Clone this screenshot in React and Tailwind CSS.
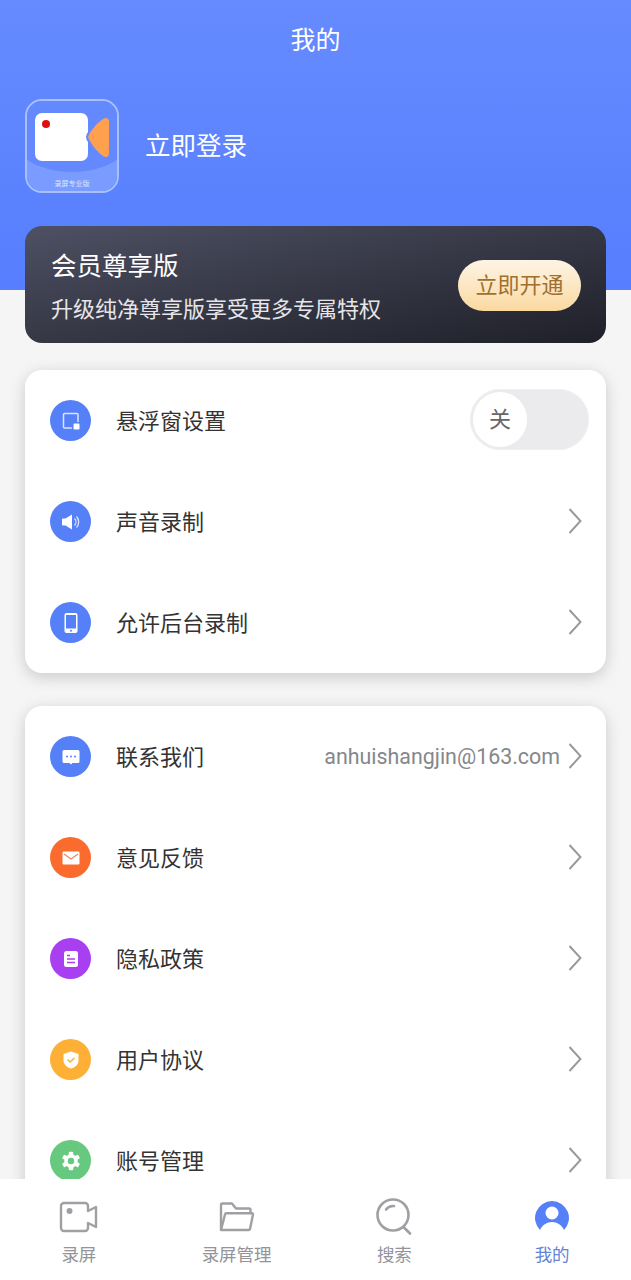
const FONT = "font-['Roboto','Noto_Sans_CJK_SC',sans-serif]"

// small white glyphs that sit inside the coloured round icons
const FloatIcon = () => (
  <svg width="20" height="20" viewBox="0 0 20 20" fill="none">
    <path d="M11 17H3.500a1 1 0 0 1-1-1V3.500a1 1 0 0 1 1-1H16a1 1 0 0 1 1 1V11" stroke="#dbe4ff" strokeWidth="1.500" />
    <rect x="12.500" y="12.500" width="6" height="6" rx="1.200" fill="#fff" />
  </svg>
)

const SoundIcon = () => (
  <svg width="20" height="20" viewBox="0 0 20 20" fill="none">
    <path d="M1 7.500a1 1 0 0 1 1-1h2.500L11 2.500v15l-6.500-4H2a1 1 0 0 1-1-1z" fill="#fff" />
    <path d="M13.500 6.500a5 5 0 0 1 0 7" stroke="#dbe4ff" strokeWidth="1.300" />
    <path d="M15.500 4.500a8 8 0 0 1 0 11" stroke="#dbe4ff" strokeWidth="1.300" />
  </svg>
)

const PhoneIcon = () => (
  <svg width="20" height="22" viewBox="0 0 20 22" fill="none">
    <rect x="3.500" y="1" width="13" height="20" rx="2" fill="#fff" />
    <rect x="5" y="3" width="10" height="13.500" fill="#5680f8" />
    <circle cx="10" cy="18.700" r="1" fill="#5680f8" />
  </svg>
)

const ChatIcon = () => (
  <svg width="20" height="20" viewBox="0 0 20 20" fill="none">
    <path d="M3 3h14a1.500 1.500 0 0 1 1.500 1.500v10A1.500 1.500 0 0 1 17 16h-5.500L10 17.500 8.500 16H3a1.500 1.500 0 0 1-1.500-1.500v-10A1.500 1.500 0 0 1 3 3z" fill="#fff" />
    <circle cx="6" cy="9.500" r="1" fill="#5680f8" />
    <circle cx="10" cy="9.500" r="1" fill="#5680f8" />
    <circle cx="14" cy="9.500" r="1" fill="#5680f8" />
  </svg>
)

const MailIcon = () => (
  <svg width="20" height="20" viewBox="0 0 20 20" fill="none">
    <rect x="1.500" y="3.500" width="17" height="13" rx="1.200" fill="#fff" />
    <path d="M3 6l7 5 7-5" stroke="#f0885a" strokeWidth="1.300" />
  </svg>
)

const DocIcon = () => (
  <svg width="20" height="20" viewBox="0 0 20 20" fill="none">
    <rect x="3" y="2" width="14" height="16" rx="2.500" fill="#fff" />
    <path d="M6 6.500h3M6 10h8M6 13.500h8" stroke="#a83ff0" strokeWidth="1.300" />
  </svg>
)

const ShieldIcon = () => (
  <svg width="20" height="20" viewBox="0 0 20 20" fill="none">
    <path d="M10 1.500l7.500 2.500v6.500c0 4-3.500 7-7.500 8-4-1-7.500-4-7.500-8V4z" fill="#fff" />
    <path d="M6.500 9.500l2.700 2.500 4.300-4" stroke="#f6b04a" strokeWidth="1.500" />
  </svg>
)

const GearIcon = () => (
  <svg width="20" height="20" viewBox="0 0 20 20" fill="none">
    <circle cx="10" cy="10" r="5" stroke="#fff" strokeWidth="3.600" />
    {[0, 60, 120, 180, 240, 300].map((deg) => (
      <rect key={deg} x="7.800" y="0.800" width="4.400" height="4" rx="1" fill="#fff" transform={`rotate(${deg} 10 10)`} />
    ))}
  </svg>
)

const Chevron = () => (
  <svg width="14" height="26" viewBox="0 0 14 26" fill="none" className="mb-[2px] shrink-0">
    <path d="M1.500 1l11 12-11 12" stroke="#97989c" strokeWidth="1.900" />
  </svg>
)

const settings = [
  { label: "声音录制", color: "bg-[#5680f8]", icon: <SoundIcon /> },
  { label: "允许后台录制", color: "bg-[#5680f8]", icon: <PhoneIcon /> },
]

const others = [
  { label: "联系我们", color: "bg-[#5680f8]", icon: <ChatIcon />, value: "anhuishangjin@163.com" },
  { label: "意见反馈", color: "bg-[#fb6b2d]", icon: <MailIcon /> },
  { label: "隐私政策", color: "bg-[#a83ff0]", icon: <DocIcon /> },
  { label: "用户协议", color: "bg-[#fdb035]", icon: <ShieldIcon /> },
  { label: "账号管理", color: "bg-[#66c97f]", icon: <GearIcon /> },
]

const Row = ({ label, color, icon, value, children }) => (
  <div className="flex h-[101px] items-center pr-[24px] pl-[25px]">
    <div className={`flex h-[41px] w-[41px] shrink-0 items-center justify-center rounded-full ${color}`}>{icon}</div>
    <span className="ml-[25px] flex-1 pt-[2px] text-[22px] text-[#333]">{label}</span>
    {children}
    {value && <span className="mr-[8px] pt-[2px] text-[21.400px] text-[#85878b]">{value}</span>}
    {!children && <Chevron />}
  </div>
)

const AppLogo = () => (
  <div className="h-[94px] w-[94px] shrink-0 overflow-hidden rounded-[17px] border-2 border-[#a9c0ff]">
    <svg width="90" height="90" viewBox="0 0 90 90">
      <rect width="90" height="90" fill="#6489ff" />
      <path d="M0 59c25 16 65 16 90 0v31H0z" fill="#7a9bff" />
      <path d="M15 12h39a7 7 0 0 1 7 7v12a8 8 0 0 0-2 5 8 8 0 0 0 2 5v12a7 7 0 0 1-7 7H15a7 7 0 0 1-7-7V19a7 7 0 0 1 7-7z" fill="#fff" />
      <circle cx="19" cy="23" r="4" fill="#dd0f12" />
      <path d="M61 36c3-7 9-14 15-18 3-2 6-1 6 3v31c0 4-3 5-6 3-6-4-12-12-15-19z" fill="#fea04e" />
      <text x="45" y="85" textAnchor="middle" fontSize="7" fill="#dfe7ff">录屏专业版</text>
    </svg>
  </div>
)

const tabs = [
  {
    label: "录屏",
    icon: (
      <svg width="40" height="32" viewBox="0 0 40 32" fill="none" stroke="#a0a0a4" strokeWidth="2.400">
        <path d="M5 2h21a3 3 0 0 1 3 3v5l8-4v20l-8-4v5a3 3 0 0 1-3 3H5a3 3 0 0 1-3-3V5a3 3 0 0 1 3-3z" strokeLinejoin="round" />
        <circle cx="10.500" cy="10" r="3" fill="#a0a0a4" stroke="none" />
      </svg>
    ),
  },
  {
    label: "录屏管理",
    icon: (
      <svg width="36" height="30" viewBox="0 0 36 30" fill="none" stroke="#a0a0a4" strokeWidth="2.400" strokeLinejoin="round">
        <path d="M2 28V3a1.500 1.500 0 0 1 1.500-1.500H13l4 5h13a1.500 1.500 0 0 1 1.500 1.500v3" />
        <path d="M2 28l4-15.500a1.500 1.500 0 0 1 1.500-1.200H33a1 1 0 0 1 1 1.300L31 27a1.500 1.500 0 0 1-1.500 1z" />
      </svg>
    ),
  },
  {
    label: "搜索",
    icon: (
      <svg width="36" height="38" viewBox="0 0 36 38" fill="none" stroke="#a0a0a4" strokeWidth="2.600" strokeLinecap="round">
        <circle cx="17" cy="17" r="15.500" />
        <path d="M10 11.500c2-2.500 5-3.800 8-3.500" />
        <path d="M28 29.500l6 6" />
      </svg>
    ),
  },
  {
    label: "我的",
    active: true,
    icon: (
      <svg width="36" height="34" viewBox="0 0 36 34">
        <path d="M18 1a17 17 0 0 1 12 29c-2-5-7-8-12-8s-10 3-12 8A17 17 0 0 1 18 1z" fill="#5680f8" />
        <circle cx="18" cy="13" r="6.500" fill="#fff" />
      </svg>
    ),
  },
]

export default function App() {
  return (
    <div className={`flex h-[1280px] w-[631px] flex-col overflow-hidden bg-[#f5f5f5] ${FONT}`}>
      <main className="min-h-0 flex-1 overflow-hidden">
        <header className="h-[290px] bg-gradient-to-b from-[#668bff] to-[#567efe] text-white">
          <h1 className="pt-[22px] text-center text-[25px] leading-[37px] font-normal">我的</h1>
          <div className="mt-[40px] ml-[25px] flex items-center">
            <AppLogo />
            <span className="ml-[26px] text-[25.500px]">立即登录</span>
          </div>
        </header>

        <section className="relative mx-[25px] mt-[-64px] flex h-[117px] justify-between rounded-[17px] bg-gradient-to-br from-[#4e5164] to-[#1f2029] pr-[25px] pl-[26px]">
          <div className="pt-[21px] text-white">
            <div className="text-[25.500px] leading-[38px]">会员尊享版</div>
            <div className="mt-[9px] text-[22px] leading-[32px] text-[#e6e6ea]">升级纯净尊享版享受更多专属特权</div>
          </div>
          <button className="mt-[34px] flex h-[51px] w-[123px] items-center justify-center rounded-full bg-gradient-to-b from-[#fdf4e6] to-[#fbd99f] text-[22px] text-[#a07030]">
            立即开通
          </button>
        </section>

        <section className="mx-[25px] mt-[27px] rounded-[17px] bg-white shadow-[0_4px_16px_rgba(0,0,0,0.18)]">
          <Row label="悬浮窗设置" color="bg-[#5680f8]" icon={<FloatIcon />}>
            <div className="mr-[-7px] mb-[2px] flex h-[61px] w-[119px] items-center rounded-full bg-[#ebebed] shadow-[inset_0_0_0_1px_#f0f0f0]">
              <div className="ml-[3px] flex h-[55px] w-[54px] items-center justify-center rounded-full bg-white text-[22px] text-[#666]">
                关
              </div>
            </div>
          </Row>
          {settings.map((item) => (
            <Row key={item.label} {...item} />
          ))}
        </section>

        <section className="mx-[25px] mt-[33px] rounded-[17px] bg-white shadow-[0_4px_16px_rgba(0,0,0,0.18)]">
          {others.map((item) => (
            <Row key={item.label} {...item} />
          ))}
        </section>
      </main>

      <nav className="relative grid h-[101px] shrink-0 grid-cols-4 bg-white">
        {tabs.map((tab) => (
          <div key={tab.label} className="flex flex-col items-center">
            <div className="flex h-[64px] items-center justify-center pt-[12px]">{tab.icon}</div>
            <span className={`text-[17.500px] leading-[24px] ${tab.active ? "text-[#6484d6]" : "text-[#949498]"}`}>{tab.label}</span>
          </div>
        ))}
      </nav>
    </div>
  )
}
